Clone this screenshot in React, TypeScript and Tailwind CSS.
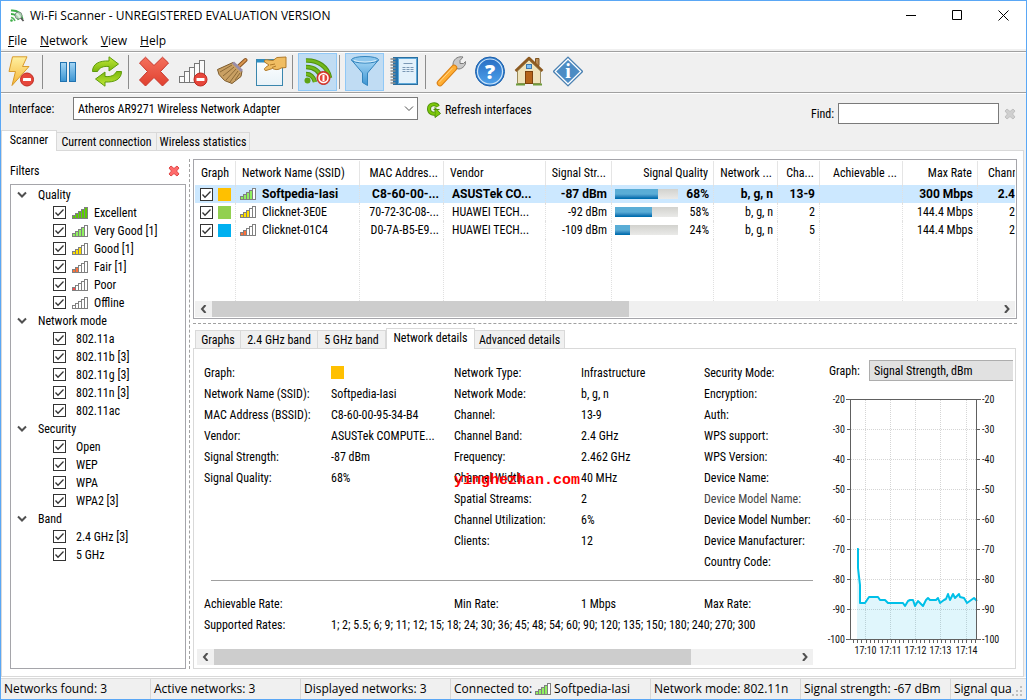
import { clsx } from "clsx";
import type { ReactNode } from "react";

const GREEN = "#7cc70a";

/* ---------- small icons ---------- */

function SignalBars({ level = 0, color = "#fff" }: { level?: number; color?: string }) {
    const heights = [3, 5, 7, 9, 11];
    return (
        <svg width="16" height="12" viewBox="0 0 16 12" className="shrink-0" shapeRendering="crispEdges">
            {heights.map((h, i) => (
                <rect
                    key={h}
                    x={0.5 + i * 3}
                    y={11.5 - h}
                    width="3"
                    height={h}
                    fill={i < level ? color : "#fff"}
                    stroke="#808080"
                />
            ))}
        </svg>
    );
}

function CrossIcon({ color, edge }: { color: string; edge: string }) {
    return (
        <svg width="12" height="12" viewBox="0 0 12 12">
            <path
                d="M1 3 3 1 6 3.5 9 1 11 3 8.5 6 11 9 9 11 6 8.5 3 11 1 9 3.5 6Z"
                fill={color}
                stroke={edge}
                strokeLinejoin="round"
            />
        </svg>
    );
}

function Chevron({ className, d = "M1 1.5 5 5.5 9 1.5", width = 1 }: { className?: string; d?: string; width?: number }) {
    return (
        <svg width="10" height="8" viewBox="0 0 10 8" className={className} fill="none">
            <path d={d} stroke="#505050" strokeWidth={width} />
        </svg>
    );
}

function Check({ label, className }: { label: string; className?: string }) {
    return (
        <span className={clsx("grid size-[13px] shrink-0", className)}>
            <input
                type="checkbox"
                defaultChecked
                aria-label={label}
                className="peer col-start-1 row-start-1 size-[13px] appearance-none border border-[#333] bg-white"
            />
            <svg
                viewBox="0 0 13 13"
                className="pointer-events-none invisible col-start-1 row-start-1 size-[13px] peer-checked:visible"
                fill="none"
            >
                <path d="M2.5 6.5 5 9.2 10.5 3.5" stroke="#333" strokeWidth="1.3" />
            </svg>
        </span>
    );
}

function AppIcon() {
    return (
        <svg width="16" height="16" viewBox="0 0 16 16" fill="none">
            <path d="M2 2.5C8 2 12 5 13.5 11" stroke="#3fae49" strokeWidth="2" />
            <path d="M2 6C6 6 8.500 8 9.500 12" stroke="#3fae49" strokeWidth="1.800" />
            <path d="M2 9.500C4 9.500 5 10.500 6 13" stroke="#56b85c" strokeWidth="1.500" />
            <circle cx="2.500" cy="12.500" r="1.300" fill="#3fae49" />
            <circle cx="9.500" cy="7.500" r="3.500" fill="#d5ead8" fillOpacity=".7" stroke="#7f8f86" />
            <path d="m12 10 2.500 3" stroke="#555" strokeWidth="1.800" />
        </svg>
    );
}

/* ---------- toolbar icons, all on a 32px board ---------- */

function Board({ children }: { children: ReactNode }) {
    return (
        <svg width="32" height="32" viewBox="0 0 32 32" fill="none">
            {children}
        </svg>
    );
}

function Badge({ x, y, power }: { x: number; y: number; power?: boolean }) {
    return (
        <g>
            <circle cx={x} cy={y} r="6.5" fill="#e6463b" stroke="#c02a20" />
            {power ? (
                <>
                    <circle cx={x} cy={y} r="4.5" fill="#e6463b" stroke="#fff" strokeWidth="1.5" />
                    <path d={`M${x} ${y - 3}v6`} stroke="#fff" strokeWidth="2" />
                </>
            ) : (
                <rect x={x - 4} y={y - 1.5} width="8" height="3" rx=".5" fill="#fff" />
            )}
        </g>
    );
}

const Bolt = (
    <Board>
        <path d="M7.500.8H22L17.500 10.500H24L7 29.500 10.500 15.500H4Z" fill="url(#gold)" stroke="#d89a2b" strokeLinejoin="round" />
        <Badge x={22} y={23.5} />
    </Board>
);

const Pause = (
    <Board>
        <rect x="8.500" y="6.500" width="6" height="19" fill="url(#blue)" stroke="#2173b0" />
        <rect x="17.500" y="6.500" width="6" height="19" fill="url(#blue)" stroke="#2173b0" />
    </Board>
);

const swirl = "M1.500 15.500C1.500 8 8 4.500 18 5V.8L27.500 8 18 15V10.500C12 10 8.500 11.500 6.500 15.500Z";
const Reload = (
    <Board>
        <path d={swirl} fill="url(#lime)" stroke="#5f9b0c" strokeLinejoin="round" />
        <path d={swirl} transform="rotate(180 16 15.5)" fill="url(#lime)" stroke="#5f9b0c" strokeLinejoin="round" />
    </Board>
);

const Delete = (
    <Board>
        <path
            d="M1.500 7 7.500 1.200 16 9.500 24.500 1.200 30.500 7 22.500 15.500 30.500 24 24.500 30 16 21.500 7.500 30 1.500 24 9.500 15.500Z"
            fill="url(#red)"
            stroke="#c8352a"
            strokeLinejoin="round"
        />
    </Board>
);

const NoSignal = (
    <Board>
        {[6, 11, 15, 19, 22].map((h, i) => (
            <rect key={h} x={2.5 + i * 5} y={26.5 - h} width="5" height={h} fill="#fafafa" stroke="#777" />
        ))}
        <Badge x={23.5} y={23.5} />
    </Board>
);

const Broom = (
    <Board>
        <path d="M29.500 4 22 11" stroke="#8a5523" strokeWidth="4" strokeLinecap="round" />
        <path d="M29.500 4 22 11" stroke="#d9954e" strokeWidth="2" strokeLinecap="round" />
        <path d="M17 6.500 26 15 25 20.500 16 27.500 8.500 24.500 3 18.500 1.500 13.500Z" fill="#c9a063" stroke="#7c5a2c" strokeLinejoin="round" />
        <path d="M16 9 4 16M18 11 7 20M20 13 10 24M22 15 14 26M24 17 19 24" stroke="#8c6a38" />
        <path d="m17 6.500 9 8.500" stroke="#9a8ea8" strokeWidth="3" />
    </Board>
);

const HandWindow = (
    <Board>
        <rect x="1.500" y="3.500" width="26" height="26" fill="url(#paper)" stroke="#3a86ad" />
        <path d="M2 5h25" stroke="#2e8fc4" strokeWidth="3" />
        <path
            d="M31 1v10.500L26 12C24 14 20 14 17.500 12.500L11 14.500C9 14.500 9 12.500 10.500 11.500L14 9 9.500 6C9 4.500 10 3.500 11.500 3.800L18 4.500 22 1.500Z"
            fill="#f0bd62"
            stroke="#b07a2a"
            strokeLinejoin="round"
        />
        <path d="m15 9 5-1M17 11.500l4-1.500" stroke="#b07a2a" />
    </Board>
);

const Wireless = (
    <Board>
        <g stroke="#4f9010" strokeWidth="4.500">
            <path d="M4 4.500C16 4 26 11 28 22" />
            <path d="M4 11C12 11 18 15.500 20.500 24" />
            <path d="M4 18C8.500 18 11.500 20.500 13 26" />
        </g>
        <g stroke="#72b81c" strokeWidth="2.500">
            <path d="M4 4.500C16 4 26 11 28 22" />
            <path d="M4 11C12 11 18 15.500 20.500 24" />
            <path d="M4 18C8.500 18 11.500 20.500 13 26" />
        </g>
        <circle cx="5.500" cy="24.500" r="3" fill="#5ea314" />
        <Badge x={21.5} y={22} power />
    </Board>
);

const Funnel = (
    <Board>
        <path d="M2.500 4 13.500 17V26.500L18.500 29.500V17L29.500 4Z" fill="url(#blue)" stroke="#3384bd" strokeLinejoin="round" />
        <ellipse cx="16" cy="3.800" rx="13.500" ry="3.300" fill="#8dc6ec" stroke="#3384bd" />
        <path d="M5 4.500c6 2 16 2 22 0" stroke="#d9effc" />
    </Board>
);

const Notebook = (
    <Board>
        <rect x="5.500" y="1.500" width="24" height="27" fill="#5fa9da" stroke="#2a6fa0" />
        <path d="M6 2h4v26H6z" fill="#2474b0" />
        <rect x="11" y="3" width="17" height="24" fill="#e3f1fb" />
        <path d="M15.500 7.500h9M14.500 11.500h3m1 0h3m1 0h3M14.500 13.500h3m1 0h3m1 0h3M14.500 15.500h3m1 0h3m1 0h3" stroke="#7b98b5" />
        {[3, 6, 9, 12, 15, 18, 21, 24, 27].map((y) => (
            <path key={y} d={`M2.500 ${y}h5`} stroke="#8b8b8b" strokeWidth="1.500" />
        ))}
    </Board>
);

const Wrench = (
    <Board>
        <path d="M19 13 22 10" stroke="#8a8a8a" strokeWidth="4" />
        <path
            d="M19 12C17 9 18 4 22 1.800 24 .8 26 .5 28 1L25 4.500V7.500H28.500L30.500 5.500C31 9 28 12.500 24 13Z"
            fill="#c9c9c9"
            stroke="#7c7c7c"
            strokeLinejoin="round"
        />
        <path d="M5 27 19 12" stroke="#d97f14" strokeWidth="6.500" strokeLinecap="round" />
        <path d="M5 27 19 12" stroke="#ffae33" strokeWidth="4.500" strokeLinecap="round" />
        <path d="M4.500 26 17 12.500" stroke="#ffd58a" strokeLinecap="round" />
    </Board>
);

const Help = (
    <Board>
        <circle cx="16" cy="15.500" r="14.500" fill="#2f7fd0" stroke="#1f5fa8" />
        <circle cx="16" cy="15.500" r="12.500" fill="url(#deep)" stroke="#cfe5f8" strokeWidth="1.200" />
        <text x="16" y="22.500" textAnchor="middle" fill="#fff" fontSize="20" fontWeight="800" fontFamily="Open Sans, sans-serif">
            ?
        </text>
    </Board>
);

const House = (
    <Board>
        <path d="M22.500 2.500h3.500v7h-3.500z" fill="#b98c55" stroke="#80551f" />
        <path d="M4.500 15 16 4 27.500 15V27.500H4.500Z" fill="#efe3bb" stroke="#9a8a5a" />
        <path d="M2.500 15 16 2 29.500 15" stroke="#8d5a20" strokeWidth="2.500" strokeLinejoin="round" />
        <rect x="13.500" y="8.500" width="5" height="4" fill="#7cc0f5" stroke="#3c79ae" />
        <rect x="12.500" y="15.500" width="7" height="12" fill="#b5641a" stroke="#7c420d" />
        <path d="M3 28.500h9M20 28.500h9" stroke="#6e9c3c" strokeWidth="2" />
    </Board>
);

const Info = (
    <Board>
        <path d="M16 .8 31 15.500 16 30.200 1 15.500Z" fill="#2b6fae" stroke="#4a7fae" strokeLinejoin="round" />
        <path d="M16 3 28.800 15.500 16 28 3.200 15.500Z" fill="#4c8cc4" stroke="#fff" strokeWidth="1.300" />
        <text x="16" y="22" textAnchor="middle" fill="#fff" fontSize="20" fontWeight="700" fontFamily="Liberation Serif, serif">
            i
        </text>
    </Board>
);

function Gradients() {
    const stops = [
        ["gold", "#fff0a0", "#f5b536"],
        ["blue", "#a5d6f5", "#3b94d2"],
        ["lime", "#c2ea3a", "#7cb80c"],
        ["red", "#f4705c", "#e0402f"],
        ["deep", "#2a6fc4", "#4da0ea"],
        ["paper", "#ffffff", "#e8f2f8"],
    ];
    return (
        <svg width="0" height="0" className="absolute" aria-hidden>
            <defs>
                {stops.map(([id, from, to]) => (
                    <linearGradient key={id} id={id} x1="0" y1="0" x2="0" y2="1">
                        <stop offset="0" stopColor={from} />
                        <stop offset="1" stopColor={to} />
                    </linearGradient>
                ))}
            </defs>
        </svg>
    );
}

/* ---------- data ---------- */

const tools: ({ label: string; icon: ReactNode; on?: boolean } | null)[] = [
    { label: "Stop", icon: Bolt },
    null,
    { label: "Pause", icon: Pause },
    { label: "Refresh", icon: Reload },
    null,
    { label: "Delete", icon: Delete },
    { label: "Remove inactive", icon: NoSignal },
    { label: "Clear", icon: Broom },
    { label: "Properties", icon: HandWindow },
    null,
    { label: "Wireless power", icon: Wireless, on: true },
    null,
    { label: "Filter", icon: Funnel, on: true },
    { label: "Details", icon: Notebook },
    null,
    { label: "Options", icon: Wrench },
    { label: "Help", icon: Help },
    { label: "Home page", icon: House },
    { label: "About", icon: Info },
];

const filters: { title: string; items: { label: string; level?: number; color?: string }[] }[] = [
    {
        title: "Quality",
        items: [
            { label: "Excellent", level: 5, color: "#5ccc00" },
            { label: "Very Good [1]", level: 4, color: "#90f060" },
            { label: "Good [1]", level: 3, color: "#ffe000" },
            { label: "Fair [1]", level: 2, color: "#ff7038" },
            { label: "Poor", level: 1, color: "#ff4848" },
            { label: "Offline", level: 0 },
        ],
    },
    {
        title: "Network mode",
        items: [
            { label: "802.11a" },
            { label: "802.11b [3]" },
            { label: "802.11g [3]" },
            { label: "802.11n [3]" },
            { label: "802.11ac" },
        ],
    },
    { title: "Security", items: [{ label: "Open" }, { label: "WEP" }, { label: "WPA" }, { label: "WPA2 [3]" }] },
    { title: "Band", items: [{ label: "2.4 GHz [3]" }, { label: "5 GHz" }] },
];

const columns = [
    { title: "Graph", width: "w-[41px]", align: "text-center" },
    { title: "Network Name (SSID)", width: "w-[124px]", align: "pl-1.5 text-left" },
    { title: "MAC Addres...", width: "w-[84px]", align: "pr-[5px] text-right" },
    { title: "Vendor", width: "w-[102px]", align: "pl-1.5 text-left" },
    { title: "Signal Str...", width: "w-[66px]", align: "pr-[5px] text-right" },
    { title: "Signal Quality", width: "w-[102px]", align: "pr-[5px] text-right" },
    { title: "Network ...", width: "w-[64px]", align: "pr-[5px] text-right" },
    { title: "Cha...", width: "w-[42px]", align: "pr-[5px] text-right" },
    { title: "Achievable ...", width: "w-[83px]", align: "pr-[5px] text-right" },
    { title: "Max Rate", width: "w-[75px]", align: "pr-[5px] text-right" },
    { title: "Chann", width: "", align: "pl-2.5 text-left" },
];

const networks = [
    { name: "Softpedia-Iasi", swatch: "bg-[#ffc000]", level: 4, color: "#90f060", mac: "C8-60-00-...", vendor: "ASUSTek CO...", dbm: "-87 dBm", quality: 68, channel: "13-9", rate: "300 Mbps", width: "2.4" },
    { name: "Clicknet-3E0E", swatch: "bg-[#92d050]", level: 3, color: "#ffe000", mac: "70-72-3C-08-...", vendor: "HUAWEI TECH...", dbm: "-92 dBm", quality: 58, channel: "2", rate: "144.4 Mbps", width: "2" },
    { name: "Clicknet-01C4", swatch: "bg-[#00b0f0]", level: 2, color: "#ff7038", mac: "D0-7A-B5-E9...", vendor: "HUAWEI TECH...", dbm: "-109 dBm", quality: 24, channel: "5", rate: "144.4 Mbps", width: "2" },
];

const left = [
    ["Graph:", ""],
    ["Network Name (SSID):", "Softpedia-Iasi"],
    ["MAC Address (BSSID):", "C8-60-00-95-34-B4"],
    ["Vendor:", "ASUSTek COMPUTE..."],
    ["Signal Strength:", "-87 dBm"],
    ["Signal Quality:", "68%"],
];

const middle = [
    ["Network Type:", "Infrastructure"],
    ["Network Mode:", "b, g, n"],
    ["Channel:", "13-9"],
    ["Channel Band:", "2.4 GHz"],
    ["Frequency:", "2.462 GHz"],
    ["Channel Width:", "40 MHz"],
    ["Spatial Streams:", "2"],
    ["Channel Utilization:", "6%"],
    ["Clients:", "12"],
];

const right = [
    "Security Mode:",
    "Encryption:",
    "Auth:",
    "WPS support:",
    "WPS Version:",
    "Device Name:",
    "Device Model Name:",
    "Device Model Number:",
    "Device Manufacturer:",
    "Country Code:",
];

/* ---------- widgets ---------- */

interface Tab {
    label: string;
    width: string;
}

function Tabs({ tabs, active }: { tabs: Tab[]; active: string }) {
    return (
        <div role="tablist" className="flex h-[21px] items-end">
            {tabs.map(({ label, width }, i) => {
                const on = label === active;
                return (
                    <button
                        key={label}
                        role="tab"
                        aria-selected={on}
                        className={clsx(
                            "border-t border-r border-[#d9d9d9] whitespace-nowrap",
                            width,
                            on ? "relative -mb-px h-[21px] border-l bg-white pb-0.5" : "h-[18px] bg-[#f0f0f0]",
                            !on && i === 0 && "border-l"
                        )}
                    >
                        {label}
                    </button>
                );
            })}
        </div>
    );
}

function ScrollBar({ thumb }: { thumb: string }) {
    return (
        <div className="flex h-4 shrink-0 bg-[#f0f0f0]">
            <button aria-label="Scroll left" className="flex w-[17px] items-center justify-center">
                <Chevron d="M6.500 0 3 4 6.500 8" width={2} />
            </button>
            <div className="flex-1">
                <div className={clsx("h-full bg-[#cdcdcd]", thumb)} />
            </div>
            <button aria-label="Scroll right" className="flex w-[17px] items-center justify-center">
                <Chevron d="M3 0 6.500 4 3 8" width={2} />
            </button>
        </div>
    );
}

function FilterTree() {
    return (
        <aside className="flex w-44 shrink-0 flex-col">
            <div className="flex h-6 items-center justify-between pr-1.5">
                <span>Filters</span>
                <button aria-label="Close filters">
                    <CrossIcon color="#ff6b6b" edge="#e04848" />
                </button>
            </div>
            <div className="mt-px flex-1 border border-[#a5a5aa] pt-px">
                {filters.map(({ title, items }) => (
                    <div key={title}>
                        <div className="flex h-[18px] items-center pl-1.5">
                            <Chevron width={2} />
                            <span className="ml-[11px]">{title}</span>
                        </div>
                        {items.map(({ label, level, color }) => (
                            <div key={label} className="flex h-[18px] items-center pl-[42px]">
                                <Check label={label} className="mb-px" />
                                {level === undefined ? (
                                    <span className="ml-2.5">{label}</span>
                                ) : (
                                    <span className="ml-1.5 flex items-center gap-1.5">
                                        <SignalBars level={level} color={color} />
                                        {label}
                                    </span>
                                )}
                            </div>
                        ))}
                    </div>
                ))}
            </div>
        </aside>
    );
}

function NetworkTable() {
    const cell = "border-r border-dotted border-[#e0e0e0]";
    return (
        <div className="border border-[#a5a5aa] p-px">
            <div className="overflow-hidden">
                <table className="w-full table-fixed border-separate border-spacing-0 whitespace-nowrap">
                    <thead>
                        <tr className="h-6">
                            {columns.map(({ title, width, align }) => (
                                <th key={title} className={clsx("border-r border-[#e5e5e5] font-normal last:border-r-0", width, align)}>
                                    {title}
                                </th>
                            ))}
                        </tr>
                    </thead>
                    <tbody>
                        {networks.map((n, i) => (
                            <tr
                                key={n.name}
                                className={clsx("h-[18px]", i === 0 && "bg-[#cce8ff] font-['Roboto',sans-serif] font-bold")}
                            >
                                <td className={cell}>
                                    <span className="flex items-center gap-[5px] pl-[5px]">
                                        <Check label={`Show ${n.name} on graph`} />
                                        <span className={clsx("size-[13px]", n.swatch)} />
                                    </span>
                                </td>
                                <td className={cell}>
                                    <span className="flex items-center gap-1.5 pl-1">
                                        <SignalBars level={n.level} color={n.color} />
                                        {n.name}
                                    </span>
                                </td>
                                <td className={clsx(cell, "pr-1 text-right")}>{n.mac}</td>
                                <td className={clsx(cell, "pl-2")}>{n.vendor}</td>
                                <td className={clsx(cell, "pr-1 text-right")}>{n.dbm}</td>
                                <td className={cell}>
                                    <span className="flex items-center justify-between pr-1 pl-[3px]">
                                        <span className="h-2.5 w-[63px] bg-linear-to-b from-[#d2d2ce] to-[#eaeae8]">
                                            <span
                                                className="block h-full bg-linear-to-b from-[#5aadd6] from-50% to-[#0070b0] to-90%"
                                                style={{ width: `${n.quality}%` }}
                                            />
                                        </span>
                                        {n.quality}%
                                    </span>
                                </td>
                                <td className={clsx(cell, "pr-1 text-right")}>b, g, n</td>
                                <td className={clsx(cell, "pr-1 text-right")}>{n.channel}</td>
                                <td className={cell} />
                                <td className={clsx(cell, "pr-1 text-right")}>{n.rate}</td>
                                <td className="text-right">{n.width}</td>
                            </tr>
                        ))}
                        <tr className="h-[62px]">
                            {columns.map(({ title }) => (
                                <td key={title} className={clsx(cell, "last:border-r-0")} />
                            ))}
                        </tr>
                    </tbody>
                </table>
            </div>
            <ScrollBar thumb="w-[53%]" />
        </div>
    );
}

function SignalChart() {
    const line =
        "M32 159H33V178L35 195V213H40L44 207H53L55 210H60L63 213H78L80 216 83 211 85 210H88L90 216 93 211 98 216 101 210 103 208 105 210H111L113 208 115 213 119 210 121 209 123 204 125 210 128 204 130 208 134 204 135 207 139 208 142 213 149 208 152 211";
    const levels = [-20, -30, -40, -50, -60, -70, -80, -90, -100];
    const times = [
        [40.5, "17:10"],
        [65.5, "17:11"],
        [90.5, "17:12"],
        [115.5, "17:13"],
        [141.5, "17:14"],
    ] as const;
    return (
        <svg
            width="180"
            height="270"
            viewBox="0 0 180 270"
            fontSize="10"
            fontFamily="Roboto Condensed, Roboto, sans-serif"
            fill="none"
            className="mt-[9px]"
        >
            <g stroke="#d5d5d5" strokeDasharray="1 1">
                {levels.slice(1, -1).map((v, i) => (
                    <path key={v} d={`M26 ${39.5 + i * 30}H151`} />
                ))}
                {times.map(([x]) => (
                    <path key={x} d={`M${x} 10V249`} />
                ))}
            </g>
            <path d={`${line}V249H32Z`} fill="#00b8e6" fillOpacity=".12" />
            <path d={line} stroke="#00c0e8" strokeWidth="2" strokeLinejoin="round" />
            <path d="M21 9.500H156M21 249.500H156M25.500 9V250M151.500 9V250" stroke="#606060" />
            {levels.map((v, i) => (
                <g key={v}>
                    <path d={`M22 ${9.5 + i * 30}h4M151 ${9.5 + i * 30}h4`} stroke="#606060" />
                    <text x="20" y={13 + i * 30} textAnchor="end" fill="#111">
                        {v}
                    </text>
                    <text x="157" y={13 + i * 30} fill="#111">
                        {v}
                    </text>
                </g>
            ))}
            {Array.from({ length: 30 }, (_, i) => (
                <path key={i} d={`M${Math.round(28 + i * 4.2) + 0.5} 250v3`} stroke="#606060" />
            ))}
            {times.map(([x, t]) => (
                <text key={t} x={x} y="264" textAnchor="middle" fill="#111">
                    {t}
                </text>
            ))}
        </svg>
    );
}

function DetailPanel() {
    const row = "flex h-[21px] items-center whitespace-nowrap";
    return (
        <div className="mr-px flex flex-1 border border-[#d9d9d9] pb-[3px] pl-[3px]">
            <div className="flex min-w-0 flex-1 flex-col pt-[13px]">
                <div className="grid grid-cols-[250px_250px_1fr] pl-[7px]">
                    <dl>
                        {left.map(([name, value]) => (
                            <div key={name} className={row}>
                                <dt className="w-[127px]">{name}</dt>
                                <dd>{value || <span className="block size-[13px] bg-[#ffc000]" />}</dd>
                            </div>
                        ))}
                    </dl>
                    <dl>
                        {middle.map(([name, value]) => (
                            <div key={name} className={clsx(row, "relative")}>
                                <dt className="w-[127px]">{name}</dt>
                                <dd>{value}</dd>
                                {name === "Channel Width:" && (
                                    <span className="absolute top-1.5 left-0 font-['Liberation_Mono',monospace] text-[15px] font-bold text-[#ff0000]">
                                        yinghezhan.com
                                    </span>
                                )}
                            </div>
                        ))}
                    </dl>
                    <dl>
                        {right.map((name) => (
                            <div key={name} className={row}>
                                <dt className={clsx(name === "Device Model Name:" && "text-[#444]")}>{name}</dt>
                            </div>
                        ))}
                    </dl>
                </div>
                <hr className="mt-2 ml-3.5 border-[#a0a0a0]" />
                <div className="mt-3 grid grid-cols-[127px_123px_127px_1fr] pl-[7px]">
                    <span className={row}>Achievable Rate:</span>
                    <span />
                    <span className={row}>Min Rate:</span>
                    <span className="flex">
                        <span className={clsx(row, "w-[123px]")}>1 Mbps</span>
                        <span className={row}>Max Rate:</span>
                    </span>
                    <span className={row}>Supported Rates:</span>
                    <span className={clsx(row, "col-span-3")}>
                        1; 2; 5.5; 6; 9; 11; 12; 15; 18; 24; 30; 36; 45; 48; 54; 60; 90; 120; 135; 150; 180; 240; 270; 300
                    </span>
                </div>
                <div className="mt-auto">
                    <ScrollBar thumb="w-[82%]" />
                </div>
            </div>
            <div className="w-[202px] shrink-0 pt-[11px] pr-0.5 pl-3">
                <label className="flex items-center pl-1">
                    <span className="w-10">Graph:</span>
                    <select className="h-[21px] flex-1 appearance-none border border-r-0 border-[#adadad] bg-[#e1e1e1] pl-1">
                        <option>Signal Strength, dBm</option>
                    </select>
                </label>
                <SignalChart />
            </div>
        </div>
    );
}

function StatusBar() {
    const cell = "flex shrink-0 items-center border-r border-[#d7d7d7] pl-[3px]";
    return (
        <footer className="relative flex h-[21px] border-t border-[#d9d9d9] bg-[#f0f0f0] font-['Open_Sans',sans-serif] whitespace-nowrap">
            <span className={clsx(cell, "w-[150px]")}>Networks found: 3</span>
            <span className={clsx(cell, "w-[150px]")}>Active networks: 3</span>
            <span className={clsx(cell, "w-[150px]")}>Displayed networks: 3</span>
            <span className={clsx(cell, "w-[200px] gap-[3px]")}>
                Connected to: <SignalBars level={4} color="#90f060" /> Softpedia-Iasi
            </span>
            <span className={clsx(cell, "w-[150px]")}>Network mode: 802.11n</span>
            <span className={clsx(cell, "w-[150px]")}>Signal strength: -67 dBm</span>
            <span className="flex items-center pl-[3px]">Signal qua</span>
            <svg width="12" height="12" className="absolute right-0.5 bottom-0.5" fill="#bfbfbf">
                <path d="M8 1h2v2H8zM8 5h2v2H8zM8 9h2v2H8zM4 5h2v2H4zM4 9h2v2H4zM0 9h2v2H0z" />
            </svg>
        </footer>
    );
}

export default function App() {
    return (
        <div className="flex min-h-screen flex-col border border-[#5aa7f5] bg-[#f0f0f0] font-['Roboto_Condensed',Roboto,sans-serif] text-xs leading-4 text-black">
            <Gradients />

            {/* Title bar */}
            <header className="flex h-[31px] items-center bg-white pb-0.5 pl-2 font-['Open_Sans',sans-serif]">
                <AppIcon />
                <h1 className="ml-[5px] flex-1">Wi-Fi Scanner - UNREGISTERED EVALUATION VERSION</h1>
                <button aria-label="Minimize" className="flex w-[46px] justify-center">
                    <svg width="11" height="11" stroke="#000"><path d="M0 5.500h10" /></svg>
                </button>
                <button aria-label="Maximize" className="flex w-[46px] justify-center">
                    <svg width="11" height="11" stroke="#000" fill="none"><path d="M.5.500h9v9h-9z" /></svg>
                </button>
                <button aria-label="Close" className="flex w-[46px] justify-center">
                    <svg width="11" height="11" stroke="#000"><path d="m.5.500 10 10m0-10-10 10" /></svg>
                </button>
            </header>

            {/* Menu */}
            <nav className="flex h-[19px] items-center gap-[13px] border-b-2 border-[#f0f0f0] bg-white pl-[7px] font-['Open_Sans',sans-serif]">
                {["File", "Network", "View", "Help"].map((item) => (
                    <button key={item}>
                        <u>{item[0]}</u>
                        {item.slice(1)}
                    </button>
                ))}
            </nav>

            {/* Toolbar */}
            <div className="border-y border-[#a0a0a0]">
                <div className="flex border-t border-white pb-px">
                    {tools.map((tool, i) =>
                        tool ? (
                            <button
                                key={tool.label}
                                aria-label={tool.label}
                                className={clsx(
                                    "flex h-[38px] w-[39px] items-center justify-center",
                                    tool.on && "border border-[#90c8f6] bg-[#c0dcf3]"
                                )}
                            >
                                {tool.icon}
                            </button>
                        ) : (
                            <span key={i} className="flex w-2 items-center pl-0.5">
                                <i className="h-[34px] w-px bg-[#8c8c8c]" />
                            </span>
                        )
                    )}
                </div>
            </div>

            {/* Interface and search */}
            <div className="flex h-9 items-start border-t border-white pr-2.5 pl-2">
                <label className="mt-[3px] flex items-center">
                    <span className="w-16">Interface:</span>
                    <span className="relative flex items-center">
                        <select className="h-[23px] w-[345px] appearance-none border border-[#7a7a7a] bg-white pl-1">
                            <option>Atheros AR9271 Wireless Network Adapter</option>
                        </select>
                        <Chevron className="pointer-events-none absolute right-1" />
                    </span>
                </label>
                <button className="mt-2 ml-2 flex items-center gap-1">
                    <svg width="15" height="16" viewBox="0 0 15 16" fill="none">
                        <path d="M12 4.500C10 1 3 1.500 3 7c0 4 4 5 6 4.500" stroke="#4f8f0c" strokeWidth="4" />
                        <path d="M7.500 7.500h6M9 5.500l5.500 6L9 15.500Z" fill={GREEN} stroke="#4f8f0c" strokeWidth="1" />
                        <path d="M12 4.500C10 1 3 1.500 3 7c0 4 4 5 6 4.500" stroke={GREEN} strokeWidth="2.200" />
                    </svg>
                    Refresh interfaces
                </button>
                <div className="mt-[9px] ml-auto flex items-center gap-1">
                    <label htmlFor="find">Find:</label>
                    <input id="find" type="text" className="mr-px h-[21px] w-[161px] border border-[#7a7a7a] bg-white px-1 outline-none" />
                    <button aria-label="Clear search">
                        <CrossIcon color="#cfcfcf" edge="#c0c0c0" />
                    </button>
                </div>
            </div>

            <Tabs
                active="Scanner"
                tabs={[
                    { label: "Scanner", width: "w-[56px]" },
                    { label: "Current connection", width: "w-[100px]" },
                    { label: "Wireless statistics", width: "w-[93px]" },
                ]}
            />

            {/* Scanner page */}
            <main className="mr-0.5 flex flex-1 border border-[#d9d9d9] bg-white pt-2 pr-1.5 pb-[7px] pl-2">
                <FilterTree />
                <div className="ml-[3px] w-1 shrink-0 border-l border-dashed border-[#a0a0a0]" />
                <div className="flex min-w-0 flex-1 flex-col">
                    <NetworkTable />
                    <div className="mt-1 h-1 border-t border-dashed border-[#a0a0a0]" />
                    <div className="pl-0.5">
                        <Tabs
                            active="Network details"
                            tabs={[
                                { label: "Graphs", width: "w-[46px]" },
                                { label: "2.4 GHz band", width: "w-[77px]" },
                                { label: "5 GHz band", width: "w-[68px]" },
                                { label: "Network details", width: "w-[89px]" },
                                { label: "Advanced details", width: "w-[90px]" },
                            ]}
                        />
                    </div>
                    <DetailPanel />
                </div>
            </main>

            <div className="h-px bg-white" />
            <StatusBar />
        </div>
    );
}
